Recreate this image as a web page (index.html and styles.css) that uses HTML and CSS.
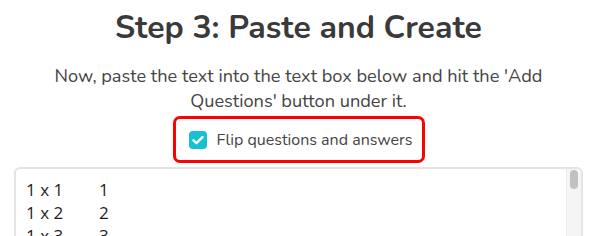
FILE: index.html
```html
<!DOCTYPE html>
<html>
    <head>
        <meta charset="utf-8">
        <title>Step 3: Paste and Create</title>
        <meta name="viewport" content="width=device-width, initial-scale=1">
        <link rel="stylesheet" href="styles.css">
    </head>
    <body>
        <div class="step">
            <h2 class="title">Step 3: Paste and Create</h2>
            <p class="hint">Now, paste the text into the text box below and hit the 'Add Questions' button under it.</p>
            <div class="flip">
                <label class="flip-box">
                    <input type="checkbox" checked>
                    <span>Flip questions and answers</span>
                </label>
            </div>
            <div class="paste-wrap">
                <textarea class="paste">1 x 1	1
1 x 2	2
1 x 3	3
1 x 4	4
1 x 5	5
1 x 6	6
1 x 7	7
1 x 8	8
1 x 9	9
1 x 10	10
2 x 1	2
2 x 2	4
2 x 3	6
2 x 4	8
2 x 5	10
2 x 6	12
2 x 7	14
2 x 8	16
2 x 9	18
2 x 10	20</textarea>
                <div class="bar"><div class="thumb"></div></div>
            </div>
        </div>
    </body>
</html>
```

FILE: styles.css
```css
*{margin:0;padding:0;box-sizing:border-box}
html,body{overflow:hidden}
body{
    background:#fff;
    font-family:"Nunito","Lato","Open Sans",sans-serif;
    color:#3b3b3b;
}
.step{
    height:236px;
    padding:0 13px 0 14px;
    text-align:center;
}
.title{
    padding-top:7px;
    font-size:32px;
    font-weight:bold;
    line-height:42px;
    color:#3a3a3a;
}
.hint{
    margin:15px auto 0;
    width:505px;
    font-size:18.2px;
    line-height:25px;
    color:#444;
}
.flip{
    margin-top:2px;
    display:flex;
    justify-content:center;
}
.flip-box{
    display:flex;
    align-items:center;
    gap:10px;
    width:252px;
    height:47px;
    padding-left:13px;
    border:3px solid #f00;
    border-radius:7px;
    font-size:16px;
    color:#444;
}
.flip-box input{
    appearance:none;
    -webkit-appearance:none;
    width:18px;
    height:18px;
    border-radius:4px;
    background:#17c0d4 url("data:image/svg+xml,%3Csvg xmlns='http://www.w3.org/2000/svg' viewBox='0 0 18 18'%3E%3Cpath d='M4.5 9.3l3 2.9 6-6' fill='none' stroke='%23fff' stroke-width='2.4' stroke-linecap='round' stroke-linejoin='round'/%3E%3C/svg%3E") center/18px 18px no-repeat;
}
.paste-wrap{
    position:relative;
    margin-top:4px;
}
.paste{
    display:block;
    width:100%;
    height:200px;
    padding:9px 10px;
    border:2px solid #e4e4e4;
    border-radius:6px;
    font-family:"Open Sans",Arial,sans-serif;
    font-size:17px;
    line-height:23px;
    color:#1e1e1e;
    tab-size:73px;
    resize:none;
    overflow:hidden;
}
/* scrollbar drawn on top, headless shots drop the real one */
.bar{
    position:absolute;
    top:2px;
    right:2px;
    bottom:0;
    width:15px;
    padding-top:1px;
    background:#f5f5f5;
    border-left:1px solid #ececec;
    border-top-right-radius:5px;
}
.thumb{
    width:8px;
    height:19px;
    margin:0 auto;
    border-radius:4px;
    background:#c1c1c1;
}
```
